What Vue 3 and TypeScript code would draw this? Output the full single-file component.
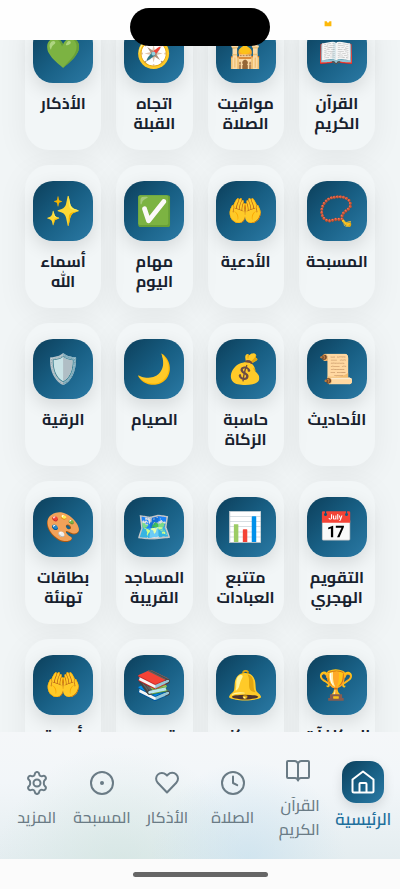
<script setup lang="ts">
interface Feature {
  icon: string
  label: string
}

interface NavItem {
  id: string
  label: string
  active?: boolean
}

const features: Feature[] = [
  { icon: '📖', label: 'القرآن الكريم' },
  { icon: '🕌', label: 'مواقيت الصلاة' },
  { icon: '🧭', label: 'اتجاه القبلة' },
  { icon: '💚', label: 'الأذكار' },
  { icon: '📿', label: 'المسبحة' },
  { icon: '🤲', label: 'الأدعية' },
  { icon: '✅', label: 'مهام اليوم' },
  { icon: '✨', label: 'أسماء الله' },
  { icon: '📜', label: 'الأحاديث' },
  { icon: '💰', label: 'حاسبة الزكاة' },
  { icon: '🌙', label: 'الصيام' },
  { icon: '🛡️', label: 'الرقية' },
  { icon: '📅', label: 'التقويم الهجري' },
  { icon: '📊', label: 'متتبع العبادات' },
  { icon: '🗺️', label: 'المساجد القريبة' },
  { icon: '🎨', label: 'بطاقات تهنئة' },
  { icon: '🏆', label: 'المكافآت' },
  { icon: '🔔', label: 'مركز الإشعارات' },
  { icon: '📚', label: 'قصص الأنبياء' },
  { icon: '🤲', label: 'أدعية مختارة' },
]

const navItems: NavItem[] = [
  { id: 'home', label: 'الرئيسية', active: true },
  { id: 'quran', label: 'القرآن الكريم' },
  { id: 'prayer', label: 'الصلاة' },
  { id: 'adhkar', label: 'الأذكار' },
  { id: 'tasbih', label: 'المسبحة' },
  { id: 'more', label: 'المزيد' },
]
</script>

<template>
  <div class="app" dir="rtl" lang="ar">
    <header class="status">
      <div class="island"></div>
      <svg class="crown" viewBox="0 0 8 6" aria-hidden="true">
        <path d="M0.6 0.2 H2.8 L3.2 1.6 H4.8 L5.4 0.2 H7.4 V5.2 H0.6 Z" fill="#fdb90b" />
      </svg>
    </header>

    <main class="features">
      <a v-for="(feature, i) in features" :key="i" class="tile" href="#">
        <span class="tile-icon">{{ feature.icon }}</span>
        <span class="tile-label">{{ feature.label }}</span>
      </a>
    </main>

    <footer class="bottom">
      <nav class="nav">
        <a v-for="item in navItems" :key="item.id" class="nav-item" :class="{ active: item.active }" href="#">
          <span class="nav-icon">
            <svg viewBox="0 0 24 24" aria-hidden="true">
              <template v-if="item.id === 'home'">
                <path d="M1.5 9.5 12 1.500l10.500 8V21a1.500 1.500 0 0 1-1.500 1.500H3A1.500 1.500 0 0 1 1.500 21z" />
                <path d="M8.5 22v-8a1 1 0 0 1 1-1h5a1 1 0 0 1 1 1v8" />
              </template>
              <template v-else-if="item.id === 'quran'">
                <path d="M12 5.5v16M2 19a1 1 0 0 1-1-1V3a1 1 0 0 1 1-1h6.500A3.500 3.500 0 0 1 12 5.500 3.500 3.500 0 0 1 15.500 2H22a1 1 0 0 1 1 1v15a1 1 0 0 1-1 1h-7a3 3 0 0 0-3 2.500A3 3 0 0 0 9 19z" />
              </template>
              <template v-else-if="item.id === 'prayer'">
                <circle cx="12" cy="12" r="11" />
                <path d="M12 5.5V12l4.2 2.2" />
              </template>
              <template v-else-if="item.id === 'adhkar'">
                <path d="M21.300 3.500a5.800 5.800 0 0 0-8.200 0L12 4.600l-1.100-1.100a5.800 5.800 0 0 0-8.200 8.200L12 21.500l9.300-9.800a5.800 5.800 0 0 0 0-8.200z" />
              </template>
              <template v-else-if="item.id === 'tasbih'">
                <circle cx="12" cy="12" r="11" />
                <circle class="dot" cx="12" cy="12" r="2" />
              </template>
              <template v-else>
                <circle cx="12" cy="12" r="3.5" />
                <path d="M9.700 3.300c.4-3.100 4.200-3.100 4.600 0 .2 1.500 1.700 2.400 3.100 1.800 2.900-1.200 4.800 2.100 2.300 4-1.200.9-1.200 4.900 0 5.800 2.500 1.900.6 5.200-2.300 4-1.400-.6-2.900.3-3.100 1.800-.4 3.100-4.200 3.100-4.600 0-.2-1.500-1.700-2.400-3.100-1.800-2.900 1.200-4.800-2.100-2.300-4 1.200-.9 1.200-4.900 0-5.800-2.500-1.900-.6-5.200 2.300-4 1.400.6 2.900-.3 3.100-1.800z" />
              </template>
            </svg>
          </span>
          <span class="nav-label">{{ item.label }}</span>
        </a>
      </nav>
      <div class="gesture"><span class="gesture-bar"></span></div>
    </footer>
  </div>
</template>

<style>
body {
  background: #f1f5f6;
}
</style>

<style scoped>
.app {
  height: 100vh;
  overflow: hidden;
  background: #f1f5f6;
  font-family: "Cairo", "DejaVu Sans", "Noto Sans", sans-serif;
}

.status {
  position: fixed;
  inset: 0 0 auto;
  z-index: 2;
  height: 40px;
  background: #fefefe;
}

.island {
  width: 140px;
  height: 38px;
  margin: 8px auto 0;
  border-radius: 19px;
  background: #000;
}

.crown {
  position: absolute;
  top: 21px;
  right: 68px;
  width: 8px;
  height: 6px;
}

.features {
  display: grid;
  grid-template-columns: repeat(4, minmax(0, 1fr));
  gap: 15px;
  padding: 7px 25px 160px;
}

.tile {
  display: flex;
  flex-direction: column;
  align-items: center;
  gap: 10px;
  min-height: 143px;
  padding: 16px 4px;
  box-sizing: border-box;
  border-radius: 24px;
  background: #f2f6f7;
  box-shadow: 0 8px 32px rgba(0, 0, 0, 0.06);
  color: #17212e;
  text-decoration: none;
}

.tile-icon {
  display: grid;
  flex: none;
  place-items: center;
  width: 60px;
  height: 60px;
  border-radius: 20px;
  background: linear-gradient(135deg, #0c3f5b 0%, #185f84 50%, #2b7aa5 100%);
  box-shadow: 0 6px 18px rgba(0, 0, 0, 0.12);
  font-family: "Noto Color Emoji", sans-serif;
  font-size: 29px;
  line-height: 36px;
}

.tile-label {
  font-size: 16px;
  font-weight: 700;
  line-height: 20px;
  text-align: center;
}

.bottom {
  position: fixed;
  inset: auto 0 0;
  z-index: 2;
}

.nav {
  display: grid;
  grid-template-columns: repeat(6, minmax(0, 1fr));
  align-items: center;
  min-height: 127px;
  padding: 12px 4px 4px;
  box-sizing: border-box;
  background:
    radial-gradient(circle at 62% 100%, rgba(196, 223, 238, 0.6), transparent 35%),
    radial-gradient(circle at 30% 110%, rgba(205, 226, 220, 0.6), transparent 40%),
    linear-gradient(#f5f7f9 0%, #f2f6f9 40%, #e4edf0 100%);
}

.nav-item {
  display: flex;
  flex-direction: column;
  align-items: center;
  gap: 10px;
  padding: 0 11px;
  color: #6a7b85;
  text-decoration: none;
}

.nav-icon {
  display: grid;
  place-items: center;
}

.nav-icon svg {
  width: 24px;
  height: 24px;
  fill: none;
  stroke: currentColor;
  stroke-width: 2;
  stroke-linecap: round;
  stroke-linejoin: round;
}

.nav-icon .dot {
  fill: currentColor;
  stroke: none;
}

.nav-label {
  font-size: 16px;
  font-weight: 500;
  line-height: 24px;
}

.active {
  gap: 4px;
  padding-bottom: 8px;
  color: #1d6f9c;
}

.active .nav-label {
  font-size: 17px;
  font-weight: 600;
}

.active .nav-icon {
  width: 42px;
  height: 42px;
  border-radius: 14px;
  background: linear-gradient(135deg, #0c3f5b 0%, #185f84 50%, #2b7aa5 100%);
  box-shadow: 0 4px 12px rgba(0, 0, 0, 0.12);
  color: #fff;
}

.gesture {
  display: flex;
  align-items: center;
  justify-content: center;
  height: 30px;
  background: #fbfbfb;
}

.gesture-bar {
  width: 135px;
  height: 5px;
  border-radius: 3px;
  background: #666;
}
</style>
